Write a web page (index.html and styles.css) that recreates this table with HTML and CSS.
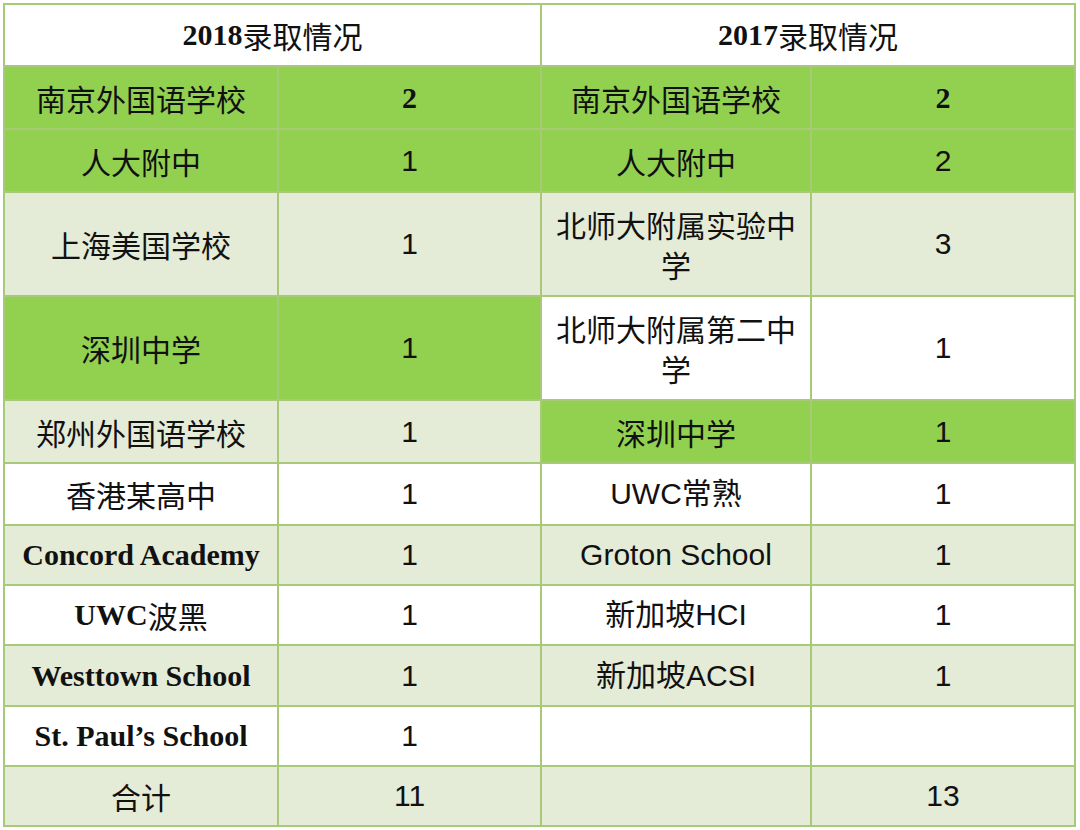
FILE: index.html
```html
<!DOCTYPE html>
<html lang="zh">
<head>
<meta charset="utf-8">
<title>录取情况</title>
<link rel="stylesheet" href="styles.css">
</head>
<body>
<div class="page">
  <div class="grid">
    <div class="cell head span2 serif-b">2018<span class="cjk">录取情况</span></div>
    <div class="cell head span2 serif-b">2017<span class="cjk">录取情况</span></div>

    <div class="cell g cjk">南京外国语学校</div>
    <div class="cell g serif-b">2</div>
    <div class="cell g cjk">南京外国语学校</div>
    <div class="cell g serif-b">2</div>

    <div class="cell g cjk">人大附中</div>
    <div class="cell g num">1</div>
    <div class="cell g cjk">人大附中</div>
    <div class="cell g num">2</div>

    <div class="cell l cjk">上海美国学校</div>
    <div class="cell l num">1</div>
    <div class="cell l cjk wrap">北师大附属实验中学</div>
    <div class="cell l num">3</div>

    <div class="cell g cjk">深圳中学</div>
    <div class="cell g num">1</div>
    <div class="cell w cjk wrap">北师大附属第二中学</div>
    <div class="cell w num">1</div>

    <div class="cell l cjk">郑州外国语学校</div>
    <div class="cell l num">1</div>
    <div class="cell g cjk">深圳中学</div>
    <div class="cell g num">1</div>

    <div class="cell w cjk">香港某高中</div>
    <div class="cell w num">1</div>
    <div class="cell w sans">UWC常熟</div>
    <div class="cell w num">1</div>

    <div class="cell l serif-b">Concord Academy</div>
    <div class="cell l num">1</div>
    <div class="cell l sans">Groton School</div>
    <div class="cell l num">1</div>

    <div class="cell w serif-b">UWC<span class="cjk">波黑</span></div>
    <div class="cell w num">1</div>
    <div class="cell w sans">新加坡HCI</div>
    <div class="cell w num">1</div>

    <div class="cell l serif-b">Westtown School</div>
    <div class="cell l num">1</div>
    <div class="cell l sans">新加坡ACSI</div>
    <div class="cell l num">1</div>

    <div class="cell w serif-b">St. Paul’s School</div>
    <div class="cell w num">1</div>
    <div class="cell w"></div>
    <div class="cell w"></div>

    <div class="cell l cjk">合计</div>
    <div class="cell l num">11</div>
    <div class="cell l"></div>
    <div class="cell l num">13</div>
  </div>
</div>
</body>
</html>
```
FILE: styles.css
```css
html, body {
  margin: 0;
  padding: 0;
  background: #ffffff;
}

.page {
  padding: 3px 0 0 3px;
}

.grid {
  display: grid;
  width: 1073px;
  box-sizing: border-box;
  padding: 2px;
  gap: 2px;
  background: #a8c978;
  grid-template-columns: 272px 261px 268px 262px;
  grid-template-rows: 60px 61px 61px 102px 102px 61px 60px 58px 58px 59px 58px 58px;
  color: #111111;
}

.cell {
  display: flex;
  align-items: center;
  justify-content: center;
  text-align: center;
  font-size: 30px;
  line-height: 40px;
  padding: 0 12px;
  box-sizing: border-box;
}

.span2 {
  grid-column: span 2;
}

.head {
  background: #ffffff;
}

.g {
  background: #92d050;
}

.l {
  background: #e4ebd6;
}

.w {
  background: #ffffff;
}

.cjk {
  font-family: "Noto Sans CJK SC", sans-serif;
  font-weight: 400;
}

.serif-b {
  font-family: "Liberation Serif", "Noto Sans CJK SC", serif;
  font-weight: 700;
}

.serif-b .cjk {
  font-weight: 400;
}

.num, .sans {
  font-family: "Liberation Sans", "Noto Sans CJK SC", sans-serif;
  font-weight: 400;
}

.sans {
  letter-spacing: 0;
}

.wrap {
  padding: 0 14px;
}
```
